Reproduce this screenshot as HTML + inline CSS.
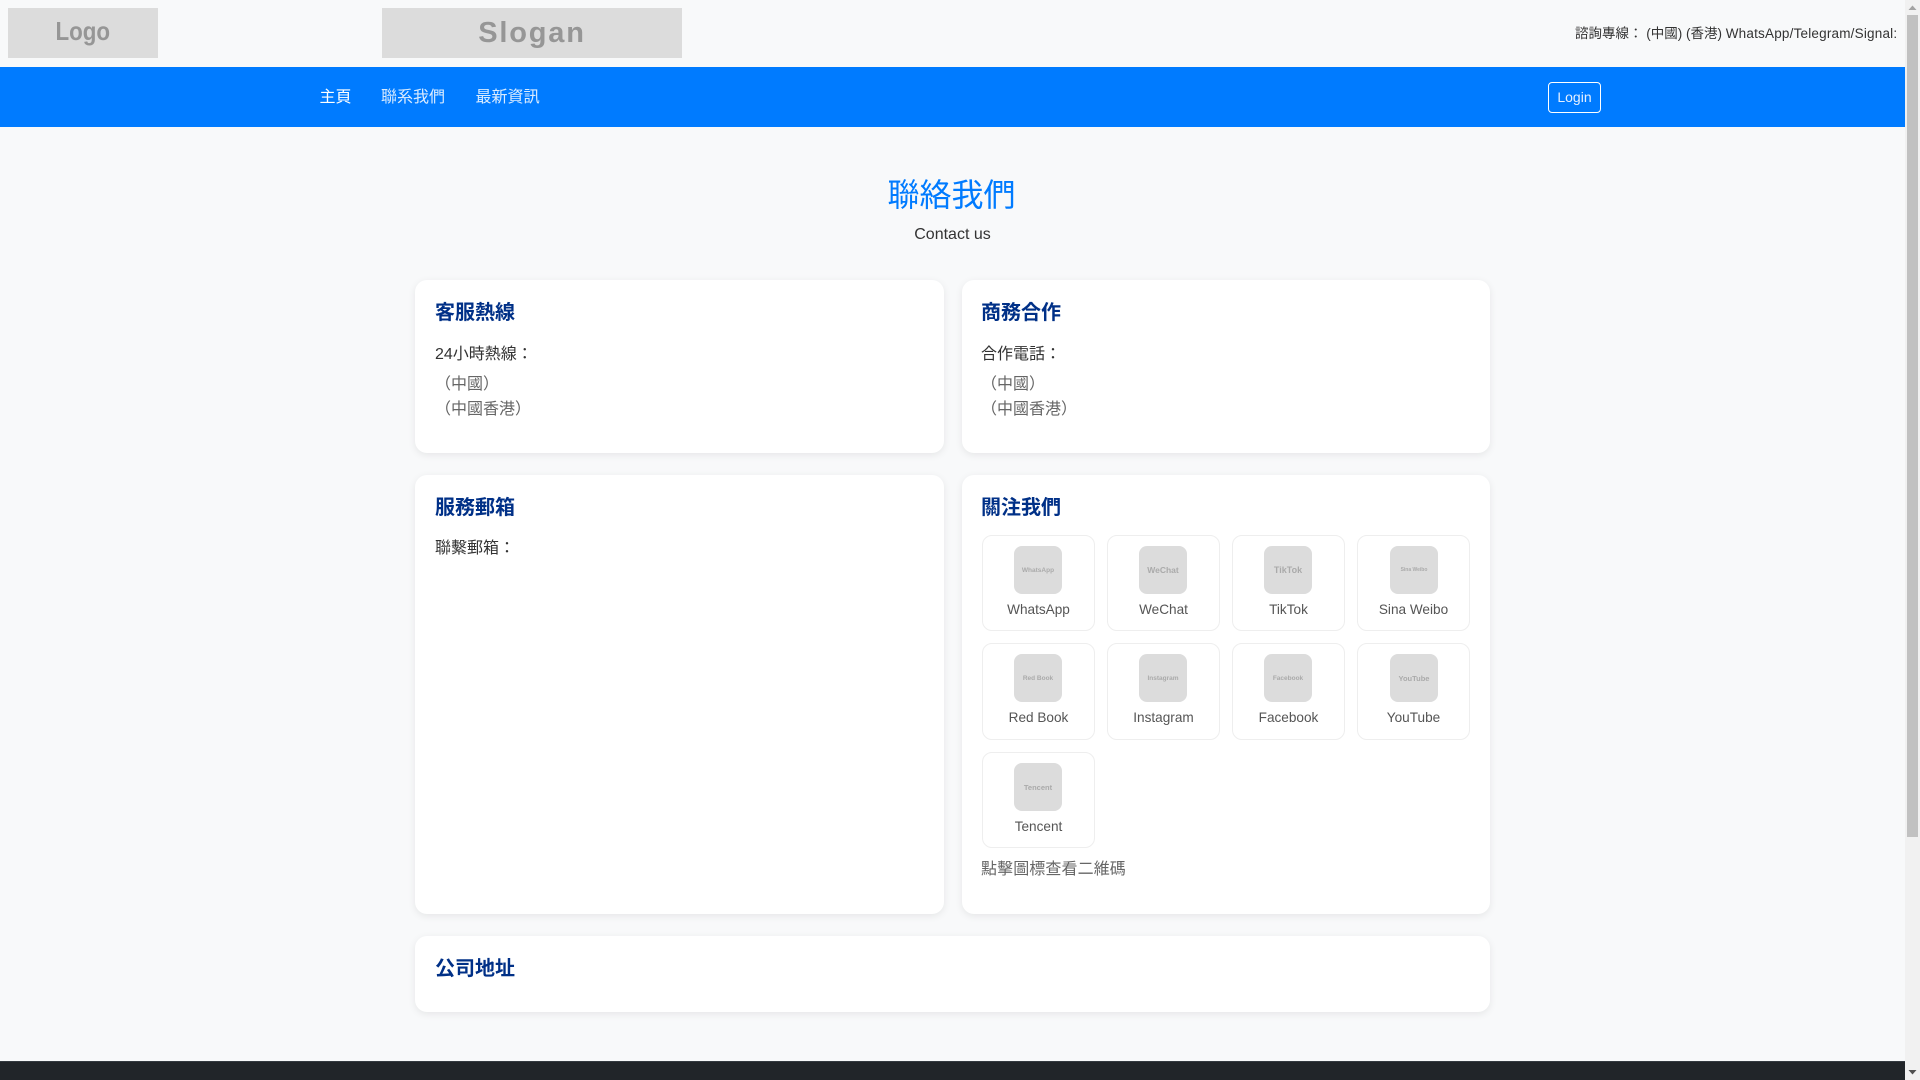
<!DOCTYPE html>
<html><head><meta charset="utf-8"><title>聯絡我們</title>
<style>
*{box-sizing:border-box}
html,body{margin:0;padding:0;width:1920px;height:1080px;overflow:hidden;background:#f8f9fa}
body{position:relative;font-family:"Liberation Sans","Noto Sans CJK JP",sans-serif;color:#333;font-size:16px;text-spacing-trim:space-all}
.a{position:absolute;white-space:nowrap}
.ph{position:absolute;background:#dcdcdc;color:#999;display:flex;align-items:center;justify-content:center;font-weight:bold}
.nav{left:0;top:67px;width:1905px;height:60px;background:#007bff}
.nl{color:rgba(255,255,255,.85);top:87px;line-height:22px}
.card{position:absolute;background:#fff;border-radius:12px;box-shadow:0 2px 8px rgba(0,0,0,.08)}
h3{position:absolute;margin:0;font-size:20px;font-weight:bold;color:#003087;line-height:30px;white-space:nowrap}
.t{position:absolute;background:#fff;border:1px solid #eee;border-radius:10px;width:113px;height:96px}
.t i{position:absolute;left:31px;top:10px;width:48px;height:48px;background:#dcdcdc;border-radius:8px;color:#aaa;font-style:normal;font-weight:bold;display:flex;align-items:center;justify-content:center;white-space:nowrap}
.t span{position:absolute;left:0;right:0;top:64px;text-align:center;font-size:13.6px;line-height:20px;color:#555;white-space:nowrap}
.p{display:inline-block;width:16px;text-align:right}
.q{display:inline-block;width:16px;text-align:left}
.sb{position:absolute;left:1905px;top:0;width:15px;height:1080px;background:#f1f1f1}
.th{position:absolute;left:2px;top:15px;width:11px;height:822px;background:#c1c1c1}
</style></head><body>
<div class="ph" style="left:8px;top:8px;width:150px;height:50px;font-size:26px;color:#969696"><span style="display:block;transform:translateY(-2px) scaleX(.86)">Logo</span></div>
<div class="ph" style="left:382px;top:8px;width:300px;height:50px;font-size:29px;letter-spacing:1.8px;color:#969696">Slogan</div>
<div class="a" style="left:1575px;top:24px;font-size:13.5px;line-height:20px;color:#333">諮詢專線： (中國) (香港) <span style="letter-spacing:.2px">WhatsApp/Telegram/Signal:</span></div>
<div class="a nav"></div>
<div class="a nl" style="left:319.5px;color:#fff">主頁</div>
<div class="a nl" style="left:381px">聯系我們</div>
<div class="a nl" style="left:475.5px">最新資訊</div>
<div class="a" style="left:1548px;top:82px;width:53px;height:31px;border:1px solid #fff;border-radius:4px;color:#e6f0ff;font-size:14px;line-height:29px;text-align:center">Login</div>

<div class="a" style="left:-1px;width:1905px;top:175px;text-align:center;font-size:32px;line-height:40px;color:#007bff">聯絡我們</div>
<div class="a" style="left:0;width:1905px;top:224px;text-align:center;font-size:16px;line-height:22px;color:#333">Contact us</div>

<div class="card" style="left:415px;top:280px;width:529px;height:173px"></div>
<h3 style="left:435px;top:298px">客服熱線</h3>
<div class="a" style="left:435px;top:344px;line-height:22px">24小時熱線：</div>
<div class="a" style="left:435px;top:374px;line-height:22px;color:#666"><span class="p">（</span>中國<span class="q">）</span></div>
<div class="a" style="left:435px;top:399px;line-height:22px;color:#666"><span class="p">（</span>中國香港<span class="q">）</span></div>

<div class="card" style="left:961.5px;top:280px;width:528.5px;height:173px"></div>
<h3 style="left:981px;top:298px">商務合作</h3>
<div class="a" style="left:981px;top:344px;line-height:22px">合作電話：</div>
<div class="a" style="left:981px;top:374px;line-height:22px;color:#666"><span class="p">（</span>中國<span class="q">）</span></div>
<div class="a" style="left:981px;top:399px;line-height:22px;color:#666"><span class="p">（</span>中國香港<span class="q">）</span></div>

<div class="card" style="left:415px;top:475px;width:529px;height:439px"></div>
<h3 style="left:435px;top:493px">服務郵箱</h3>
<div class="a" style="left:435px;top:538px;line-height:22px">聯繫郵箱：</div>

<div class="card" style="left:961.5px;top:475px;width:528.5px;height:439px"></div>
<h3 style="left:981px;top:493px">關注我們</h3>

<div class="t" style="left:982px;top:535px"><i style="font-size:6.5px">WhatsApp</i><span>WhatsApp</span></div>
<div class="t" style="left:1107px;top:535px"><i style="font-size:8.5px">WeChat</i><span>WeChat</span></div>
<div class="t" style="left:1232px;top:535px"><i style="font-size:9px">TikTok</i><span>TikTok</span></div>
<div class="t" style="left:1357px;top:535px"><i style="font-size:5px;left:32px">Sina Weibo</i><span>Sina Weibo</span></div>
<div class="t" style="left:982px;top:643px;height:97px"><i style="font-size:6.5px">Red Book</i><span>Red Book</span></div>
<div class="t" style="left:1107px;top:643px;height:97px"><i style="font-size:6.5px">Instagram</i><span>Instagram</span></div>
<div class="t" style="left:1232px;top:643px;height:97px"><i style="font-size:6.5px">Facebook</i><span>Facebook</span></div>
<div class="t" style="left:1357px;top:643px;height:97px"><i style="font-size:7.5px;left:32px">YouTube</i><span>YouTube</span></div>
<div class="t" style="left:982px;top:752px"><i style="font-size:7.5px">Tencent</i><span>Tencent</span></div>
<div class="a" style="left:981px;top:859px;line-height:22px;color:#666;letter-spacing:.1px">點擊圖標查看二維碼</div>

<div class="card" style="left:415px;top:936px;width:1075px;height:76px"></div>
<h3 style="left:435px;top:954px">公司地址</h3>

<div class="a" style="left:0;top:1061px;width:1905px;height:19px;background:#212529;border-top:1px solid #343a40"></div>

<div class="sb"><div class="th"></div>
<svg style="position:absolute;left:0;top:0" width="15" height="15"><path d="M3.5 10L7.5 5.5L11.5 10Z" fill="#a3a3a3"/></svg>
<svg style="position:absolute;left:0;top:1065px" width="15" height="15"><path d="M3.5 5L7.5 9.5L11.5 5Z" fill="#505050"/></svg>
</div>
</body></html>
